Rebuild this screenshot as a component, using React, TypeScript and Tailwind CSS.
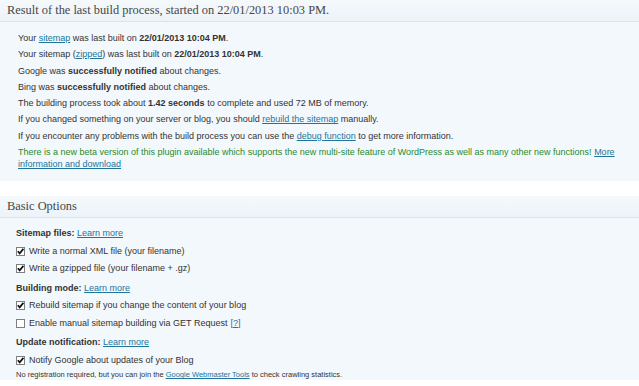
import React from "react";

function Check({ on }: { on: boolean }) {
  return (
    <span className="inline-flex w-[9px] h-[9px] border border-[#7f7f7f] bg-white items-center justify-center mr-[4px] shrink-0">
      {on && (
        <svg width="7" height="7" viewBox="0 0 7 7">
          <path d="M0.8 3.2 L2.7 5.4 L6.4 0.8" stroke="#111" strokeWidth="1.7" fill="none" />
        </svg>
      )}
    </span>
  );
}

function A({ children }: { children: React.ReactNode }) {
  return <a href="#" className="text-[#21759b] underline">{children}</a>;
}

function Box({ title, children }: { title: string; children: React.ReactNode }) {
  return (
    <section className="bg-[#f3f8fd]">
      <h3 className="h-[22px] flex items-center px-[7px] border-b border-[#d8e4ee] bg-gradient-to-b from-[#f5f9fc] to-[#ecf3f9] text-[#464646] text-[12.4px] font-['Liberation_Serif',serif]">
        {title}
      </h3>
      {children}
    </section>
  );
}

export default function App() {
  return (
    <div className="w-[639px] h-[386px] overflow-hidden bg-white font-['Liberation_Sans',Arial,sans-serif] text-[#333]">
      <Box title="Result of the last build process, started on 22/01/2013 10:03 PM.">
        <ul className="pl-[18px] pr-[10px] pt-[8px] pb-[11px] text-[9px] leading-[16.3px]">
          <li>Your <A>sitemap</A> was last built on <b>22/01/2013 10:04 PM</b>.</li>
          <li>Your sitemap (<A>zipped</A>) was last built on <b>22/01/2013 10:04 PM</b>.</li>
          <li>Google was <b>successfully notified</b> about changes.</li>
          <li>Bing was <b>successfully notified</b> about changes.</li>
          <li>The building process took about <b>1.42 seconds</b> to complete and used 72 MB of memory.</li>
          <li>If you changed something on your server or blog, you should <A>rebuild the sitemap</A> manually.</li>
          <li>If you encounter any problems with the build process you can use the <A>debug function</A> to get more information.</li>
          <li className="text-[#2a8a2a] leading-[12px] pt-[2px]">
            There is a new beta version of this plugin available which supports the new multi-site feature of WordPress as well as many other new functions! <A>More</A>
            <br />
            <A>information and download</A>
          </li>
        </ul>
      </Box>
      <div className="h-[15px] bg-white" />
      <Box title="Basic Options">
        <div className="pl-[16px] pt-[7px] text-[9px] leading-[17.5px]">
          <div><b>Sitemap files:</b> <A>Learn more</A></div>
          <label className="flex items-center"><Check on />Write a normal XML file (your filename)</label>
          <label className="flex items-center"><Check on />Write a gzipped file (your filename + .gz)</label>
          <div className="mt-[2px]"><b>Building mode:</b> <A>Learn more</A></div>
          <label className="flex items-center"><Check on />Rebuild sitemap if you change the content of your blog</label>
          <label className="flex items-center"><Check on={false} />Enable manual sitemap building via GET Request <span className="ml-[3px]"><A>[?]</A></span></label>
          <div className="mt-[2px]"><b>Update notification:</b> <A>Learn more</A></div>
          <label className="flex items-center"><Check on />Notify Google about updates of your Blog</label>
          <div className="text-[7.5px] leading-[10px] mt-[1px]">No registration required, but you can join the <A>Google Webmaster Tools</A> to check crawling statistics.</div>
        </div>
      </Box>
    </div>
  );
}
